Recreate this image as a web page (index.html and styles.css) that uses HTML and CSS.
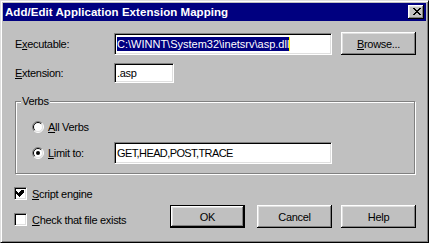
FILE: index.html
```html
<!DOCTYPE html>
<html lang="en">
<head>
    <meta charset="UTF-8">
    <title>Add/Edit Application Extension Mapping</title>
    <link rel="stylesheet" href="styles.css">
</head>
<body>
    <div class="window">
        <div class="titlebar">
            <span class="title">Add/Edit Application Extension Mapping</span>
            <div class="close-btn">
                <svg width="8" height="7" viewBox="0 0 8 7"><path fill="#000" d="M0 0h2v1h-2z M6 0h2v1h-2z M1 1h2v1h-2z M5 1h2v1h-2z M2 2h4v1h-4z M3 3h2v1h-2z M2 4h4v1h-4z M1 5h2v1h-2z M5 5h2v1h-2z M0 6h2v1h-2z M6 6h2v1h-2z"/></svg>
            </div>
        </div>

        <div class="client">
            <div class="row row-exec">
                <span class="label">E<u>x</u>ecutable:</span>
                <div class="field field-exec"><span class="sel">C:\WINNT\System32\inetsrv\asp.dll</span><span class="caret"></span></div>
                <div class="btn btn-browse"><span><u>B</u>rowse...</span></div>
            </div>

            <div class="row row-ext">
                <span class="label"><u>E</u>xtension:</span>
                <div class="field field-ext">.asp</div>
            </div>

            <div class="group">
                <span class="legend">Verbs</span>
                <div class="option">
                    <svg class="radio" width="12" height="12" viewBox="0 0 12 12">
                        <circle cx="6" cy="6" r="5" fill="#fff"/>
                        <path d="M9.9 2.1 A5.5 5.5 0 0 0 2.1 9.9" stroke="#808080" fill="none"/>
                        <path d="M2.1 9.9 A5.5 5.5 0 0 0 9.9 2.1" stroke="#fff" fill="none"/>
                        <path d="M9.2 2.8 A4.5 4.5 0 0 0 2.8 9.2" stroke="#000" fill="none"/>
                        <path d="M2.8 9.2 A4.5 4.5 0 0 0 9.2 2.8" stroke="#dfdfdf" fill="none"/>
                    </svg>
                    <span><u>A</u>ll Verbs</span>
                </div>
                <div class="option option-limit">
                    <div class="radio-label">
                        <svg class="radio" width="12" height="12" viewBox="0 0 12 12">
                            <circle cx="6" cy="6" r="5" fill="#fff"/>
                            <path d="M9.9 2.1 A5.5 5.5 0 0 0 2.1 9.9" stroke="#808080" fill="none"/>
                            <path d="M2.1 9.9 A5.5 5.5 0 0 0 9.9 2.1" stroke="#fff" fill="none"/>
                            <path d="M9.2 2.8 A4.5 4.5 0 0 0 2.8 9.2" stroke="#000" fill="none"/>
                            <path d="M2.8 9.2 A4.5 4.5 0 0 0 9.2 2.8" stroke="#dfdfdf" fill="none"/>
                            <circle cx="6" cy="6" r="2" fill="#000"/>
                        </svg>
                        <span><u>L</u>imit to:</span>
                    </div>
                    <div class="field field-limit">GET,HEAD,POST,TRACE</div>
                </div>
            </div>

            <div class="footer">
                <div class="checks">
                    <div class="check-row">
                        <span class="checkbox">
                            <svg width="9" height="9" viewBox="0 0 9 9"><path fill="#000" d="M7 1h1v3h-1v1h-1v1h-1v1h-1v1h-1v-1h-1v-1h-1v-1h-1v-3h1v1h1v1h1v-1h1v-1h1v-1h1z"/></svg>
                        </span>
                        <span><u>S</u>cript engine</span>
                    </div>
                    <div class="check-row">
                        <span class="checkbox"></span>
                        <span><u>C</u>heck that file exists</span>
                    </div>
                </div>
                <div class="buttons">
                    <div class="btn btn-default"><span>OK</span></div>
                    <div class="btn btn-cancel"><span>Cancel</span></div>
                    <div class="btn"><span>Help</span></div>
                </div>
            </div>
        </div>
    </div>
</body>
</html>
```

FILE: styles.css
```css
body {
    margin: 0;
    font-family: "Liberation Sans", Arial, sans-serif;
    font-size: 11px;
    letter-spacing: -0.3px;
    color: #000;
    background: #c0c0c0;
}

u {
    text-decoration-thickness: 1px;
    text-underline-offset: 1px;
}

.window {
    width: 429px;
    height: 243px;
    box-sizing: border-box;
    background: #c0c0c0;
    border: 1px solid;
    border-color: #dfdfdf #000 #000 #dfdfdf;
    box-shadow: inset 1px 1px #fff, inset -1px -1px #808080;
    padding: 2px;
}

.titlebar {
    height: 18px;
    background: #000080;
    color: #fff;
    display: flex;
    align-items: center;
    justify-content: space-between;
    padding: 0 2px;
}

.title {
    font-weight: bold;
    font-size: 11.5px;
    letter-spacing: 0.05px;
}

.close-btn {
    width: 16px;
    height: 14px;
    box-sizing: border-box;
    background: #c0c0c0;
    box-shadow: inset -1px -1px #000, inset 1px 1px #fff, inset -2px -2px #808080, inset 2px 2px #dfdfdf;
    display: flex;
    align-items: flex-start;
    justify-content: flex-start;
    padding: 3px 0 0 5px;
}

.close-btn svg {
    display: block;
}

.client {
    padding: 11px 10px 0 12px;
}

.row {
    display: flex;
}

.label {
    width: 99px;
    align-self: center;
}

.row-exec {
    height: 23px;
    align-items: flex-end;
}

.row-ext {
    margin-top: 8px;
    height: 20px;
}

/* sunken edit box */
.field {
    box-sizing: border-box;
    background: #fff;
    border: 1px solid;
    border-color: #808080 #fff #fff #808080;
    box-shadow: inset 1px 1px #000, inset -1px -1px #dfdfdf;
    padding: 0 2px;
    display: flex;
    align-items: center;
    white-space: nowrap;
    overflow: hidden;
}

.field-exec {
    width: 218px;
    height: 22px;
}

.field-ext {
    width: 60px;
    height: 20px;
}

.field-limit {
    width: 218px;
    height: 22px;
    letter-spacing: -0.6px;
}

.sel {
    background: #000080;
    color: #fff;
    line-height: 14px;
    letter-spacing: 0;
}

.caret {
    width: 1px;
    height: 14px;
    background: #ffff00;
}

.btn {
    width: 75px;
    height: 23px;
    box-sizing: border-box;
    background: #c0c0c0;
    box-shadow: inset -1px -1px #000, inset 1px 1px #fff, inset -2px -2px #808080, inset 2px 2px #dfdfdf;
    display: flex;
    align-items: center;
    justify-content: center;
}

.btn-browse {
    margin-left: 9px;
}

.btn-default {
    border: 1px solid #000;
}

.group {
    position: relative;
    margin-top: 18px;
    width: 400px;
    box-sizing: border-box;
    border: 1px solid #808080;
    box-shadow: inset 1px 1px #fff, 1px 1px #fff;
    padding: 14px 16px 9px;
    display: flex;
    flex-direction: column;
    gap: 4px;
}

.legend {
    position: absolute;
    top: -8px;
    left: 5px;
    padding: 0 1px;
    line-height: 14px;
    background: #c0c0c0;
}

.option {
    height: 22px;
    display: flex;
    align-items: center;
    gap: 4px;
}

.option-limit {
    gap: 0;
}

.radio-label {
    width: 82px;
    display: flex;
    align-items: center;
    gap: 4px;
}

.radio {
    display: block;
    flex: none;
}

.footer {
    margin-top: 11px;
    display: flex;
    align-items: flex-end;
    justify-content: space-between;
}

.checks {
    display: flex;
    flex-direction: column;
    gap: 9px;
    margin-left: -1px;
}

.check-row {
    height: 17px;
    display: flex;
    align-items: center;
    gap: 5px;
}

.checkbox {
    width: 13px;
    height: 13px;
    box-sizing: border-box;
    background: #fff;
    border: 1px solid;
    border-color: #808080 #fff #fff #808080;
    box-shadow: inset 1px 1px #000, inset -1px -1px #dfdfdf;
    display: flex;
    align-items: center;
    justify-content: center;
}

.checkbox svg {
    display: block;
}

.buttons {
    display: flex;
}

.btn-cancel {
    margin: 0 9px 0 12px;
}
```
